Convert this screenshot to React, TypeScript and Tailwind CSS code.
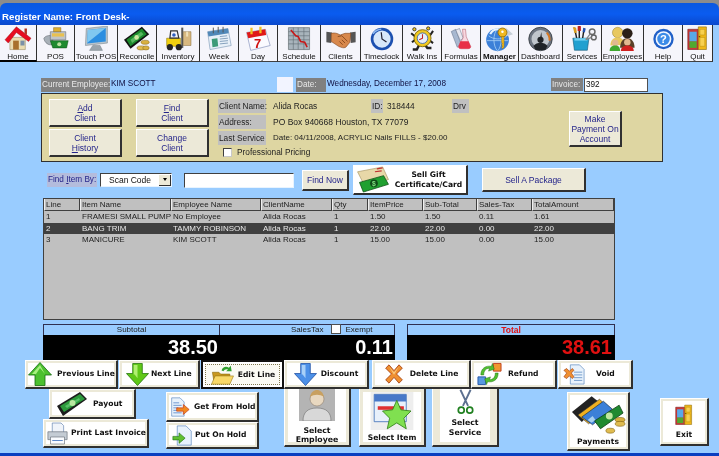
import React from "react";

const V = "font-['Liberation_Sans',Arial,sans-serif]";
const D = "font-['DejaVu_Sans',Verdana,sans-serif]";

type IP = { className?: string };
const S = ({ className, children, vb = "0 0 32 32" }: IP & { children: React.ReactNode; vb?: string }) => (
  <svg viewBox={vb} className={`shrink-0 ${className ?? ""}`}>{children}</svg>
);

const Home = (p: IP) => (
  <S {...p}>
    <path d="M6 14h19v15H6z" fill="#eadcb0" stroke="#8a7a50" strokeWidth=".6" />
    <path d="M10 18h7v11h-7z" fill="#a8702c" />
    <path d="M19 18h5v6h-5z" fill="#7a90a8" />
    <path d="M0 17 14 1l18 14-3 4-15-11L4 21z" fill="#e80c20" stroke="#901010" strokeWidth=".5" />
    <path d="M24 3h3v8l-3-2z" fill="#b03020" />
  </S>
);
const Pos = (p: IP) => (
  <S {...p}>
    <path d="M1 15c3-4 9-4 12-2l-2 10c-4 1-9-2-10-8z" fill="#a8b0b8" stroke="#505860" strokeWidth=".6" />
    <path d="M9 7h19v10H9z" fill="#c0c4c8" stroke="#505860" strokeWidth=".6" />
    <path d="M13 2h9v5h-9z" fill="#e0b030" stroke="#705010" strokeWidth=".5" />
    <path d="M11 9h15v4H11z" fill="#e8c050" />
    <path d="M9 18h22l-2 9H12z" fill="#1f8a30" stroke="#0c4a14" strokeWidth=".6" />
    <circle cx="20" cy="22.500" r="2.500" fill="#b8e0a0" />
  </S>
);
const Touch = (p: IP) => (
  <S {...p}>
    <path d="M4 3 30 0v21L3 24z" fill="#b8c4cc" stroke="#68747c" strokeWidth=".6" />
    <path d="M6 5 28 2.500V19L5 21.500z" fill="#2c8ee0" />
    <path d="M6 5 28 2.500 10 17 5 21z" fill="#80c8f0" />
    <path d="M12 24h9l3 6H8z" fill="#9aa4ac" stroke="#68747c" strokeWidth=".5" />
  </S>
);
const Reconcile = (p: IP) => (
  <S {...p}>
    <path d="M0 17 22 1l9 9L8 28z" fill="#111" />
    <path d="M3 17 22 3l6 7L8 25z" fill="#1c8a2c" />
    <path d="M8 17 21 7l3 3L10 21z" fill="#58b860" />
    <circle cx="15.500" cy="14" r="2.800" fill="#d0e8a0" />
    <ellipse cx="26" cy="20" rx="5" ry="2.500" fill="#d8b040" stroke="#806010" strokeWidth=".6" />
    <ellipse cx="21" cy="27" rx="5" ry="2.500" fill="#e0bc50" stroke="#806010" strokeWidth=".6" />
    <ellipse cx="27" cy="27" rx="4" ry="2.500" fill="#d8b040" stroke="#806010" strokeWidth=".6" />
  </S>
);
const Inventory = (p: IP) => (
  <S {...p}>
    <path d="M20 2h2.500v25H20z" fill="#555" />
    <path d="M22.500 7H32v17h-9.500z" fill="#d8b880" stroke="#806838" strokeWidth=".6" />
    <path d="M26 7h2.500v6H26z" fill="#f0e0b8" />
    <path d="M2 15h17v10H2z" fill="#f0d010" stroke="#806c00" strokeWidth=".6" />
    <path d="M7 6h8l2 9H6z" fill="none" stroke="#333" strokeWidth="1.500" />
    <circle cx="11" cy="11" r="2.200" fill="#3060c0" />
    <circle cx="6" cy="26" r="3.800" fill="#222" />
    <circle cx="17" cy="26" r="3.800" fill="#222" />
  </S>
);
const Week = (p: IP) => (
  <S {...p}>
    <path d="M2 7 27 3l4 21-26 5z" fill="#e8f0f8" stroke="#7090b0" strokeWidth=".7" />
    <path d="M2 7 27 3l1 6L3 13z" fill="#5088b8" />
    <path d="M9 2v7M15 1v7M21 1v7" stroke="#555" strokeWidth="1.200" />
    <path d="M7 16l7-1 1 10-7 1z" fill="#3c9a78" />
    <path d="M17 13l9-1M17 16l10-1M17 19l10-1M17 22l10-1" stroke="#7090b0" />
  </S>
);
const Day = (p: IP) => (
  <S {...p}>
    <path d="M2 8 25 4l6 20-24 6z" fill="#fafaff" stroke="#7080b0" strokeWidth=".7" />
    <path d="M2 8 25 4l1 7L4 15z" fill="#e01818" />
    <path d="M8 2v8M19 1v8" stroke="#f0c020" strokeWidth="2.800" />
    <text x="11" y="27" fontSize="16" fontWeight="700" fill="#d01010" fontFamily="Liberation Sans">7</text>
  </S>
);
const Schedule = (p: IP) => (
  <S {...p}>
    <path d="M3 2h26v27H3z" fill="#a8b4bc" stroke="#505a60" strokeWidth=".7" />
    <path d="M3 7h26M3 12h26M3 17h26M3 22h26M9 2v27M15 2v27M22 2v27" stroke="#5c6870" strokeWidth=".7" />
    <path d="M6 5l6 7 3 1 3 6 5 1 3 6" stroke="#c81818" strokeWidth="2" fill="none" />
  </S>
);
const Clients = (p: IP) => (
  <S {...p} vb="0 0 36 32">
    <path d="M0 7l7 1-1 13-6-1z" fill="#555" />
    <path d="M36 7l-7 1 1 13 6-1z" fill="#555" />
    <path d="M6 9c5-1 7 0 11 2l6-2 7 0-1 11-5 6c-3 2-6 0-9-1l-9-6z" fill="#d8884c" stroke="#7c4018" strokeWidth=".7" />
    <path d="M14 13l5-1 7 7M16 19l4 4M19 17l4 4" stroke="#7c4018" fill="none" />
  </S>
);
const Clock = (p: IP) => (
  <S {...p}>
    <circle cx="16" cy="16" r="15" fill="#1c50b0" />
    <circle cx="16" cy="16" r="11.500" fill="#d8e8fa" />
    <path d="M15 7l1 9 6 4" stroke="#223" strokeWidth="1.600" fill="none" />
    <path d="M4 9a14 14 0 0 1 11-6" stroke="#8cb8f0" strokeWidth="2" fill="none" />
  </S>
);
const WalkIns = (p: IP) => (
  <S {...p}>
    <path d="M12 23l-3 6H4M19 23l3 4h5" stroke="#222" strokeWidth="3" fill="none" />
    <path d="M7 13 2 9M25 12l4-6M7 17l-4 3M25 18l4 3" stroke="#222" strokeWidth="2.500" />
    <circle cx="16" cy="15" r="10.500" fill="#f0c820" stroke="#705c00" />
    <circle cx="16" cy="15" r="6.500" fill="#e8eef8" stroke="#3060b0" />
    <path d="M16 10v5l-4 2" stroke="#c02020" strokeWidth="1.300" fill="none" />
    <circle cx="6" cy="4" r="2" fill="#f0c820" stroke="#222" />
    <circle cx="23" cy="3" r="2" fill="#f0c820" stroke="#222" />
  </S>
);
const Formulas = (p: IP) => (
  <S {...p}>
    <path d="M3 6l6-3 7 20-5 4z" fill="#a8b8d0" stroke="#506078" strokeWidth=".6" />
    <path d="M9 4l5-2 5 13-4 3z" fill="#e8e8f0" stroke="#506078" strokeWidth=".6" />
    <path d="M18 3h4l1 10 6 13c0 3-3 3-5 3h-8c-3 0-4-2-3-4l6-11z" fill="#f8d8e0" stroke="#a04050" strokeWidth=".6" />
    <path d="M15 19h11l3 7c0 3-3 3-5 3h-8c-3 0-4-2-3-4z" fill="#e83048" />
  </S>
);
const Manager = (p: IP) => (
  <S {...p} vb="0 0 34 32">
    <circle cx="14" cy="17" r="14" fill="#3c80d8" />
    <path d="M3 12c6 5 15 5 22 1M14 3c-6 7-6 21 0 28M14 3c6 7 6 21 0 28M1 18h26" stroke="#a8d0f4" fill="none" />
    <path d="M5 10a11 11 0 0 1 10-6" stroke="#e8f4ff" strokeWidth="2.500" fill="none" />
    <path d="M24 2l9 8-9 3-3-3z" fill="#c8d0d8" />
    <circle cx="20" cy="8" r="5.500" fill="#f0b820" stroke="#906800" />
    <circle cx="20" cy="7" r="1.500" fill="#fff" />
    <path d="M19 13h3v13l-2 2-1-2 1-1-1-2 1-1-1-2z" fill="#f0b820" stroke="#906800" strokeWidth=".5" />
  </S>
);
const Dashboard = (p: IP) => (
  <S {...p}>
    <circle cx="16" cy="16" r="15" fill="#6c7480" stroke="#30343a" />
    <circle cx="16" cy="16" r="11.500" fill="#c0c6cc" />
    <path d="M24 8a12 12 0 0 1 3.500 10" stroke="#d87820" strokeWidth="2.500" fill="none" />
    <path d="M7 25a12 12 0 0 1 18 0l-3 5H10z" fill="#202428" />
    <circle cx="16" cy="17" r="4" fill="#202428" />
    <path d="M15 17l2-10 1 10z" fill="#222" />
  </S>
);
const Services = (p: IP) => (
  <S {...p} vb="0 0 36 32">
    <path d="M8 2l3 14M14 0v16M20 3l-2 13" stroke="#222" strokeWidth="1.800" />
    <path d="M6 1l4 1 1 6-3 1z" fill="#d8a020" />
    <path d="M12 0h4v6h-4z" fill="#c02020" />
    <path d="M19 2l3 1-1 5-3-1z" fill="#2050b0" />
    <path d="M6 15h20l-2 15H8z" fill="#20a0d0" stroke="#0c5070" strokeWidth=".7" />
    <path d="M8 15h16v3H8z" fill="#70d0f0" />
    <circle cx="30" cy="7" r="3.500" fill="none" stroke="#666" strokeWidth="1.800" />
    <circle cx="32" cy="14" r="3" fill="none" stroke="#666" strokeWidth="1.800" />
    <path d="M28 9l-6 8M29 14l-7 3" stroke="#888" strokeWidth="1.500" />
  </S>
);
const Employees = (p: IP) => (
  <S {...p} vb="0 0 36 32">
    <circle cx="12" cy="8" r="6.500" fill="#e8c860" stroke="#806810" strokeWidth=".5" />
    <path d="M3 24c0-7 4-10 9-10s8 3 8 9z" fill="#e8c860" />
    <circle cx="24" cy="9" r="6.500" fill="#2a2018" />
    <path d="M15 27c0-8 4-12 9-12s9 4 9 12z" fill="#5a4028" />
    <circle cx="9" cy="21" r="4" fill="#e0b890" />
    <path d="M2 31c0-5 3-7 7-7s6 2 6 7z" fill="#40a830" />
    <circle cx="24" cy="20" r="4" fill="#e0b890" />
    <path d="M16 31c0-5 4-7 8-7s8 2 8 7z" fill="#d02020" />
  </S>
);
const Help = (p: IP) => (
  <S {...p}>
    <circle cx="16" cy="16" r="15.500" fill="#2060c8" />
    <circle cx="16" cy="16" r="12" fill="#f4f8ff" />
    <circle cx="16" cy="16" r="9.500" fill="#3c8ce8" />
    <text x="16" y="22" textAnchor="middle" fontSize="17" fontWeight="700" fill="#fff" fontFamily="Liberation Sans">?</text>
  </S>
);
const Door = (p: IP) => (
  <S {...p} vb="0 0 26 32">
    <path d="M1 4h13v25H1z" fill="#c83838" stroke="#701010" strokeWidth=".7" />
    <path d="M3 7h9v12H3z" fill="#58a8e8" />
    <path d="M3 19h9v8H3z" fill="#50a830" />
    <path d="M14 1h10v28H14z" fill="#f0b818" stroke="#806000" strokeWidth=".7" />
    <path d="M16 4h6v7h-6zM16 14h6v11h-6z" fill="#f8d050" stroke="#a88000" strokeWidth=".5" />
    <circle cx="15.500" cy="13" r="1" fill="#705000" />
  </S>
);
const ArrowUp = (p: IP) => (
  <S {...p} vb="0 0 24 24">
    <path d="M12 .5 23.500 13H17v10.500H7V13H.5z" fill="#4cc030" stroke="#146a10" strokeWidth=".8" />
    <path d="M12 3 4 12h4l4-6 5 6z" fill="#a8f080" />
  </S>
);
const ArrowDown = (p: IP) => (
  <S {...p} vb="0 0 24 24">
    <path d="M12 23.500 23.500 11H17V.5H7V11H.5z" fill="#60c818" stroke="#207008" strokeWidth=".8" />
    <path d="M8 2h4v14l-3-4H8z" fill="#b0f070" />
  </S>
);
const BlueArrow = (p: IP) => (
  <S {...p} vb="0 0 24 24">
    <path d="M12 23.500 23.500 11H17V.5H7V11H.5z" fill="#4c90e8" stroke="#1c4ca0" strokeWidth=".8" />
    <path d="M8 2h4v14l-3-4H8z" fill="#a8d0f8" />
  </S>
);
const Folder = (p: IP) => (
  <S {...p} vb="0 0 26 24">
    <path d="M2 9h7l2 2h10v10H4z" fill="#c89820" stroke="#806000" strokeWidth=".6" />
    <path d="M5 13h20l-4 9H1z" fill="#f8d868" stroke="#907010" strokeWidth=".6" />
    <path d="M12 7c1-4 5-5 8-3l2-2 1 6-6 0 2-2c-2-1-4 0-5 2z" fill="#30a030" />
  </S>
);
const XMark = (p: IP) => (
  <S {...p} vb="0 0 24 24">
    <path d="M2 5 6 1l6 7 6-7 4 4-7 7 7 7-4 4-6-7-6 7-4-4 7-7z" fill="#f09030" stroke="#a03c10" strokeWidth="1" />
    <path d="M6 3l6 7 6-7-6 10z" fill="#f8c880" />
  </S>
);
const Refund = (p: IP) => (
  <S {...p} vb="0 0 26 24">
    <path d="M17 1h8v8h-8z" fill="#f09830" stroke="#c04020" />
    <path d="M1 15h8v8H1z" fill="#5898e0" stroke="#2858a8" />
    <path d="M4 13C4 6 9 3 15 4l1-3 2 6-6 2 1-3c-4 0-6 3-6 7z" fill="#50c030" stroke="#207010" strokeWidth=".5" />
    <path d="M22 11c0 7-5 10-11 9l-1 3-2-6 6-2-1 3c4 0 6-3 6-7z" fill="#50c030" stroke="#207010" strokeWidth=".5" />
  </S>
);
const VoidIcon = (p: IP) => (
  <S {...p} vb="0 0 24 24">
    <path d="M8 2h10l5 5v16H8z" fill="#e8f2fc" stroke="#5080b8" strokeWidth=".7" />
    <path d="M12 10h9M12 13h9M12 16h9M12 19h9" stroke="#7098c8" />
    <path d="M1 8l3-2 3 3 3-3 2 2-3 3 3 4-2 2-3-3-3 3-3-2 3-4z" fill="#f09030" stroke="#a03c10" strokeWidth=".7" />
  </S>
);
const Money = (p: IP) => (
  <S {...p} vb="0 0 30 24">
    <path d="M0 14 23 0l7 7L6 24z" fill="#1c1c1c" />
    <path d="M3 14 23 2l5 5L7 20z" fill="#2c9a3c" />
    <path d="M8 14 22 6l1 2-13 8z" fill="#58c068" />
    <circle cx="15.500" cy="11" r="3" fill="#b8e8a0" />
  </S>
);
const Printer = (p: IP) => (
  <S {...p} vb="0 0 24 24">
    <path d="M6 0h10l3 3v9H6z" fill="#f0f4fa" stroke="#5878a8" strokeWidth=".7" />
    <path d="M1 10h22v9H1z" fill="#c4ccd4" stroke="#606870" strokeWidth=".7" />
    <path d="M4 16h16v8H4z" fill="#fafcff" stroke="#606870" strokeWidth=".7" />
    <path d="M6 20h12" stroke="#4878c0" />
  </S>
);
const GetHold = (p: IP) => (
  <S {...p} vb="0 0 24 24">
    <path d="M2 1h10l5 5v17H2z" fill="#e8f2fc" stroke="#4878b8" strokeWidth=".7" />
    <path d="M4 7h7M4 10h10M4 13h6M4 16h6M4 19h10" stroke="#5888c8" />
    <path d="M8 13h8V9l7 6-7 6v-4H8z" fill="#f08820" stroke="#c02810" strokeWidth=".7" />
  </S>
);
const PutHold = (p: IP) => (
  <S {...p} vb="0 0 24 24">
    <path d="M6 1h10l6 6v16H6z" fill="#e8f2fc" stroke="#4878b8" strokeWidth=".7" />
    <path d="M1 13h7V9l7 6-7 6v-4H1z" fill="#60c030" stroke="#207010" strokeWidth=".7" />
  </S>
);
const Person = (p: IP) => (
  <S {...p} vb="0 0 36 32">
    <path d="M0 0h36v32H0z" fill="#b4b4b4" />
    <circle cx="18" cy="10" r="7" fill="#e8d8c0" stroke="#807060" strokeWidth=".5" />
    <path d="M11 8c1-5 4-7 7-7s6 2 7 7c-4-3-10-3-14 0z" fill="#c8a060" />
    <path d="M4 32c0-9 5-13 14-13s14 4 14 13z" fill="#d8d8d8" stroke="#707070" strokeWidth=".6" />
  </S>
);
const ItemStar = (p: IP) => (
  <S {...p} vb="0 0 36 32">
    <path d="M0 0h36v32H0z" fill="#eeeeee" />
    <path d="M3 2h27v23H3z" fill="#e8f0fa" stroke="#4070b8" strokeWidth=".7" />
    <path d="M3 2h27v6H3z" fill="#4878c8" />
    <path d="M6 12h22v3H6z" fill="#e03030" />
    <path d="M22 7l3.500 8 8.500 1-6 6 2 9-8-5-8 5 2-9-6-6 8.500-1z" fill="#80e050" stroke="#308018" strokeWidth=".7" />
  </S>
);
const Scissors = (p: IP) => (
  <S {...p} vb="0 0 20 30">
    <path d="M4 0l9 19M16 0 7 19" stroke="#5c7090" strokeWidth="2.200" />
    <circle cx="5" cy="24" r="3.500" fill="none" stroke="#208020" strokeWidth="2" />
    <circle cx="15" cy="24" r="3.500" fill="none" stroke="#208020" strokeWidth="2" />
  </S>
);
const Payments = (p: IP) => (
  <S {...p} vb="0 0 56 40">
    <path d="M1 17 21 1l9 7L11 27z" fill="#222" />
    <path d="M7 20 29 4l9 8-20 17z" fill="#f0b020" stroke="#333" strokeWidth=".6" />
    <path d="M11 22 33 6l9 8-20 16z" fill="#3c80d8" stroke="#123" strokeWidth=".6" />
    <path d="M17 25l5-4 3 4-4 3z" fill="#a8d0f0" />
    <path d="M24 26 49 10l4 8-23 16z" fill="#208a30" stroke="#0c3c10" strokeWidth=".8" />
    <circle cx="39" cy="21" r="3.500" fill="#c0e8a0" />
    <ellipse cx="50" cy="25" rx="5" ry="2.500" fill="#d8b040" stroke="#806010" strokeWidth=".6" />
    <ellipse cx="50" cy="29" rx="5" ry="2.500" fill="#e0bc50" stroke="#806010" strokeWidth=".6" />
    <ellipse cx="40" cy="36" rx="4.500" ry="2.500" fill="#e0bc50" stroke="#806010" strokeWidth=".6" />
  </S>
);
const Gift = (p: IP) => (
  <S {...p} vb="0 0 36 28">
    <path d="M2 6 28 1l6 13-24 8z" fill="#e8d8a8" stroke="#a89868" strokeWidth=".7" />
    <path d="M22 3l6-1M20 6l7-1" stroke="#c03030" strokeWidth="1.200" />
    <path d="M4 17 29 10l5 9-26 8z" fill="#20a030" stroke="#0c5014" strokeWidth=".8" />
    <circle cx="19" cy="18" r="4" fill="#0f4a18" />
    <text x="19" y="21" textAnchor="middle" fontSize="7" fontWeight="700" fill="#7fe080" fontFamily="Liberation Sans">$</text>
  </S>
);

const tools: [string, number, (p: IP) => React.ReactElement, string][] = [
  ["Home", 37, Home, "w-[32px]"],
  ["POS", 38, Pos, "w-[30px]"],
  ["Touch POS", 43, Touch, "w-[28px]"],
  ["Reconcile", 39, Reconcile, "w-[30px]"],
  ["Inventory", 43, Inventory, "w-[32px]"],
  ["Week", 39, Week, "w-[28px]"],
  ["Day", 39, Day, "w-[28px]"],
  ["Schedule", 43, Schedule, "w-[26px]"],
  ["Clients", 40, Clients, "w-[30px]"],
  ["Timeclock", 42, Clock, "w-[24px]"],
  ["Walk Ins", 39, WalkIns, "w-[27px]"],
  ["Formulas", 39, Formulas, "w-[24px]"],
  ["Manager", 38, Manager, "w-[30px]"],
  ["Dashboard", 44, Dashboard, "w-[25px]"],
  ["Services", 39, Services, "w-[29px]"],
  ["Employees", 42, Employees, "w-[29px]"],
  ["Help", 39, Help, "w-[21px]"],
  ["Quit", 30, Door, "w-[21px]"],
];

const cols = "grid grid-cols-[36px_91px_90px_71px_36px_55px_54px_55px_1fr]";
const heads = ["Line", "Item Name", "Employee Name", "ClientName", "Qty", "ItemPrice", "Sub-Total", "Sales-Tax", "TotalAmount"];
const rows = [
  ["1", "FRAMESI SMALL PUMP", "No Employee", "Alida Rocas", "1", "1.50", "1.50", "0.11", "1.61"],
  ["2", "BANG TRIM", "TAMMY ROBINSON", "Alida Rocas", "1", "22.00", "22.00", "0.00", "22.00"],
  ["3", "MANICURE", "KIM SCOTT", "Alida Rocas", "1", "15.00", "15.00", "0.00", "15.00"],
];

const tan = `bg-[#ece9d8] border border-white border-r-2 border-b-2 border-r-[#303030] border-b-[#303030] text-[#24248a] text-[8.500px] leading-[10px] text-center flex items-center justify-center ${V}`;

function Pic({ w, h, ml, mt, onDark, children, gap, start, className }: { w: string; h: string; ml?: string; mt?: string; onDark?: boolean; children: React.ReactNode; gap?: string; start?: string; className?: string }) {
  return (
    <button className={`${w} ${h} ${ml ?? ""} ${mt ?? ""} ${className ?? ""} shrink-0 bg-[#ece9d8] border border-white border-r-2 border-b-2 ${onDark ? "border-[#111]" : "border-r-[#303030] border-b-[#303030]"} p-[2px] ${D}`}>
      <span className={`w-full h-full bg-white flex items-center ${start ?? "justify-center"} ${gap ?? "gap-1"} font-bold text-[7.600px] leading-[10px] text-[#111] whitespace-nowrap`}>{children}</span>
    </button>
  );
}

export default function App() {
  return (
    <div className={`w-[719px] h-[456px] bg-[#8c8c8c] pt-[3px] overflow-hidden flex flex-col blur-[0.3px] ${V}`}>
      <div className="h-[22px] shrink-0 rounded-t-[6px] bg-gradient-to-b from-[#0a58e0] via-[#0a5cf0] to-[#0a48cc] px-[2px] pt-[7px] text-white font-bold text-[9.700px] leading-[13px]">
        Register Name: Front Desk-
      </div>
      <div className="flex-1 bg-[#99ccff] flex flex-col">
        <div className="flex h-[37px] shrink-0 items-stretch">
          {tools.map(([label, width, Icon, iw], i) => (
            <div key={label} style={{ width }} className={`shrink-0 bg-[#f5f5fb] border-r border-b border-r-[#303030] border-b-[#404040] flex flex-col items-center justify-between overflow-hidden pt-[1px] ${i === 0 ? "border-b-2 border-b-black" : ""} ${label === "Manager" ? "font-bold" : ""}`}>
              <Icon className={`${iw} h-[26px]`} />
              <span className="text-[8px] leading-[10px] text-[#111] whitespace-nowrap">{label}</span>
            </div>
          ))}
        </div>

        <div className="flex items-center h-[15px] mt-[15px] ml-[41px] text-[8.200px] text-[#101040] whitespace-nowrap">
          <span className="bg-[#808080] text-[#e8e8e8] px-[1px] w-[69px] h-[14px] leading-[14px]">Current Employee:</span>
          <span className="ml-[1px] w-[166px]">KIM SCOTT</span>
          <span className="w-[16px] h-[15px] bg-[#f2f4ff]" />
          <span className="ml-[3px] bg-[#808080] text-[#e8e8e8] pl-[1px] w-[30px] h-[14px] leading-[14px]">Date:</span>
          <span className="ml-[1px] w-[224px]">Wednesday, December 17, 2008</span>
          <span className="bg-[#808080] text-[#e8e8e8] pl-[1px] w-[32px] h-[13px] leading-[13px]">Invoice:</span>
          <span className="ml-[1px] w-[64px] h-[14px] bg-white border border-[#505050] leading-[12px] pl-[1px] text-[#111]">392</span>
        </div>

        <div className="mt-[1px] ml-[41px] w-[622px] h-[69px] shrink-0 bg-[#ded6a2] border border-[#303030] flex pl-[7px] pt-[5px]">
          <div className="grid grid-cols-[73px_73px] gap-x-[14px] gap-y-[2px] h-[58px] grid-rows-[28px_28px] shrink-0">
            <button className={tan}><span><u>A</u>dd<br />Client</span></button>
            <button className={tan}><span><u>F</u>ind<br />Client</span></button>
            <button className={tan}><span>Client<br /><u>H</u>istory</span></button>
            <button className={tan}><span>Change<br />Client</span></button>
          </div>
          <div className="ml-[9px] w-[351px] text-[8.300px] text-[#222] shrink-0 flex flex-col gap-[2px] leading-[14px] whitespace-nowrap">
            <div className="flex h-[14px]">
              <span className="w-[48px] bg-[#c0c0c0] pl-[1px]">Client Name:</span>
              <span className="ml-[7px] w-[98px]">Alida Rocas</span>
              <span className="w-[12px] bg-[#c0c0c0] pl-[1px]">ID:</span>
              <span className="ml-[4px] w-[65px]">318444</span>
              <span className="w-[17px] bg-[#c0c0c0] pl-[1px]">Drv</span>
            </div>
            <div className="flex h-[14px]">
              <span className="w-[48px] bg-[#c0c0c0] pl-[1px]">Address:</span>
              <span className="ml-[7px] text-[8.500px]">PO Box 940668 Houston, TX 77079</span>
            </div>
            <div className="flex h-[14px]">
              <span className="w-[48px] bg-[#c0c0c0] pl-[1px]">Last Service</span>
              <span className="ml-[7px] text-[8px]">Date: 04/11/2008, ACRYLIC Nails FILLS - $20.00</span>
            </div>
            <div className="flex items-center h-[10px] ml-[5px]">
              <span className="w-[9px] h-[9px] bg-white border border-t-[#404040] border-l-[#404040] border-r-[#c8c8c8] border-b-[#c8c8c8]" />
              <span className="ml-[5px]">Professional Pricing</span>
            </div>
          </div>
          <button className={`${tan} w-[53px] h-[36px] mt-[12px] whitespace-nowrap`}><span>Make<br />Payment On<br />Account</span></button>
        </div>

        <div className="mt-[3px] h-[30px] shrink-0 flex items-center pl-[47px]">
          <span className="w-[50px] h-[14px] bg-[#b4bcdc] text-[#24248a] text-[8.200px] leading-[14px] pl-[1px] whitespace-nowrap"><span>Find </span><u>I</u>tem By:</span>
          <div className="ml-[3px] w-[72px] h-[14px] bg-white border border-[#e8f4ff] border-t-[#404040] border-l-[#404040] flex items-center text-[8.500px] text-[#111]">
            <span className="flex-1 pl-[8px]">Scan Code</span>
            <span className="w-[12px] h-[11px] bg-[#ece9d8] border-r border-b border-[#303030] flex items-center justify-center">
              <span className="border-x-[2.500px] border-x-transparent border-t-[3px] border-t-black" />
            </span>
          </div>
          <div className="ml-[12px] w-[110px] h-[15px] bg-white border border-[#e8f4ff] border-t-[#404040] border-l-[#404040]" />
          <button className={`${tan} ml-[8px] w-[47px] h-[21px]`}>Find Now</button>
          <button className={`ml-[4px] w-[115px] h-[30px] bg-white border border-white border-r-2 border-b-2 border-r-[#303030] border-b-[#303030] flex items-center ${D}`}>
            <Gift className="w-[36px] h-[27px] ml-[1px]" />
            <span className="flex-1 text-center font-bold text-[7.600px] leading-[10px] text-[#111]">Sell Gift<br />Certificate/Card</span>
          </button>
          <button className={`${tan} ml-[14px] w-[104px] h-[24px]`}>Sell A Package</button>
        </div>

        <div className="mt-[3px] ml-[43px] w-[572px] h-[122px] shrink-0 bg-[#c0c0c0] border border-[#404040] text-[8px] text-[#222] leading-[11px]">
          <div className={`${cols} h-[12px]`}>
            {heads.map((h) => (
              <div key={h} className="border-r border-b border-[#404040] border-l border-l-[#f0f0f0] pl-[1px] whitespace-nowrap overflow-hidden">{h}</div>
            ))}
          </div>
          {rows.map((r, i) => (
            <div key={r[0]} className={`${cols} h-[11.500px] ${i === 1 ? "bg-[#404040] text-[#e8e8e8]" : ""}`}>
              {r.map((c, j) => (
                <div key={j} className="pl-[2px] whitespace-nowrap overflow-hidden">{c}</div>
              ))}
            </div>
          ))}
        </div>

        <div className="mt-[4px] ml-[43px] w-[572px] h-[36px] shrink-0 flex">
          <div className="w-[352px] flex flex-col">
            <div className="h-[11px] flex border border-b-0 border-[#303050] bg-[#99ccff] text-[8px] leading-[10px] text-[#222]">
              <span className="w-[176px] border-r border-[#303050] text-center">Subtotal</span>
              <span className="flex-1 flex items-center pl-[71px]">
                SalesTax
                <span className="ml-[8px] -mt-[2px] w-[10px] h-[10px] bg-white border border-[#505050]" />
                <span className="ml-[4px]">Exempt</span>
              </span>
            </div>
            <div className={`flex-1 bg-black flex text-white font-bold text-[20px] leading-[25px] ${V}`}>
              <span className="w-[176px] text-right pr-[1px]">38.50</span>
              <span className="flex-1 text-right pr-[2px]">0.11</span>
            </div>
          </div>
          <div className="ml-[12px] flex-1 flex flex-col">
            <div className="h-[11px] border border-b-0 border-[#303050] bg-[#99ccff] text-center text-[8.500px] leading-[10px] font-bold text-[#e01010]">Total</div>
            <div className="flex-1 bg-black text-right pr-[3px] text-[#e01010] font-bold text-[20px] leading-[25px]">38.61</div>
          </div>
        </div>

        <div className="h-[29px] shrink-0 flex ml-[25px]">
          <Pic w="w-[93px]" h="h-[29px]" start="justify-start" gap="gap-[5px]"><ArrowUp className="w-[24px] h-[24px]" />Previous Line</Pic>
          <Pic w="w-[81px]" h="h-[29px]" ml="ml-[1px]" start="justify-start pl-[4px]" gap="gap-[2px]"><ArrowDown className="w-[23px] h-[23px]" />Next Line</Pic>
          <button className={`ml-[1px] w-[83px] h-[29px] shrink-0 bg-white border-2 border-[#111] p-[2px] ${D}`}>
            <span className="w-full h-full border border-dotted border-[#807850] bg-[#fbfbf4] flex items-center justify-center gap-[3px] font-bold text-[7.600px] text-[#111]"><Folder className="w-[25px] h-[22px]" />Edit Line</span>
          </button>
          <Pic w="w-[85px]" h="h-[29px]"><BlueArrow className="w-[23px] h-[23px]" />Discount</Pic>
          <Pic w="w-[99px]" h="h-[29px]" ml="ml-[3px]" gap="gap-[6px]"><XMark className="w-[20px] h-[20px]" />Delete Line</Pic>
          <Pic w="w-[86px]" h="h-[29px]" start="justify-start pl-[3px]" gap="gap-[6px]"><Refund className="w-[25px] h-[24px]" />Refund</Pic>
          <Pic w="w-[75px]" h="h-[29px]" ml="ml-[1px]" start="justify-start pl-[2px]" gap="gap-[11px]"><VoidIcon className="w-[22px] h-[22px]" />Void</Pic>
        </div>

        <div className="flex h-[64px] shrink-0 items-start">
          <div className="ml-[43px] w-[106px] flex flex-col items-start">
            <Pic w="w-[87px]" h="h-[30px]" ml="ml-[6px]" start="justify-start pl-[5px]" gap="gap-[6px]"><Money className="w-[30px] h-[24px]" />Payout</Pic>
            <Pic w="w-[106px]" h="h-[29px]" start="justify-start pl-[1px]" gap="gap-[3px]"><Printer className="w-[21px] h-[23px]" />Print Last Invoice</Pic>
          </div>
          <div className="ml-[17px] w-[93px] flex flex-col mt-[3px]">
            <Pic w="w-[93px]" h="h-[30px]" start="justify-start pl-[1px]" gap="gap-[4px]"><GetHold className="w-[20px] h-[22px]" />Get From Hold</Pic>
            <Pic w="w-[93px]" h="h-[27px]" start="justify-start pl-[3px]" gap="gap-[2px]"><PutHold className="w-[21px] h-[21px]" />Put On Hold</Pic>
          </div>
          <button className={`ml-[25px] w-[67px] h-[58px] shrink-0 bg-[#ece9d8] border-r-2 border-b-2 border-[#303030] border-l border-l-white px-[3px] pb-[3px] ${D}`}>
            <span className="w-full h-full bg-white flex flex-col items-center font-bold text-[7.800px] leading-[9px] text-[#111]">
              <Person className="w-[36px] h-[32px]" />
              <span className="mt-[5px]">Select<br />Employee</span>
            </span>
          </button>
          <button className={`ml-[8px] w-[67px] h-[58px] shrink-0 bg-[#ece9d8] border-r-2 border-b-2 border-[#303030] border-l border-l-white p-[3px] ${D}`}>
            <span className="w-full h-full bg-white flex flex-col items-center font-bold text-[7.600px] text-[#111] whitespace-nowrap">
              <ItemStar className="w-[46px] h-[38px]" />
              <span className="mt-[2px]">Select Item</span>
            </span>
          </button>
          <button className={`ml-[6px] w-[67px] h-[58px] shrink-0 bg-[#ece9d8] border-r-2 border-b-2 border-[#303030] border-l border-l-white px-[7px] pb-[3px] ${D}`}>
            <span className="w-full h-full bg-white flex flex-col items-center font-bold text-[7.800px] leading-[10px] text-[#111]">
              <Scissors className="w-[17px] h-[27px]" />
              <span className="mt-[2px]">Select<br />Service</span>
            </span>
          </button>
          <Pic w="w-[63px]" h="h-[59px]" ml="ml-[68px]" mt="mt-[3px]" className="text-center"><span className="flex flex-col items-center"><Payments className="w-[55px] h-[40px]" /><span className="mt-[2px]">Payments</span></span></Pic>
          <Pic w="w-[49px]" h="h-[48px]" ml="ml-[30px]" mt="mt-[9px]"><span className="flex flex-col items-center"><Door className="w-[18px] h-[23px]" /><span className="mt-[3px]">Exit</span></span></Pic>
        </div>
      </div>
      <div className="h-[3px] shrink-0 bg-[#0a3fc0] mb-[1px]" />
    </div>
  );
}
